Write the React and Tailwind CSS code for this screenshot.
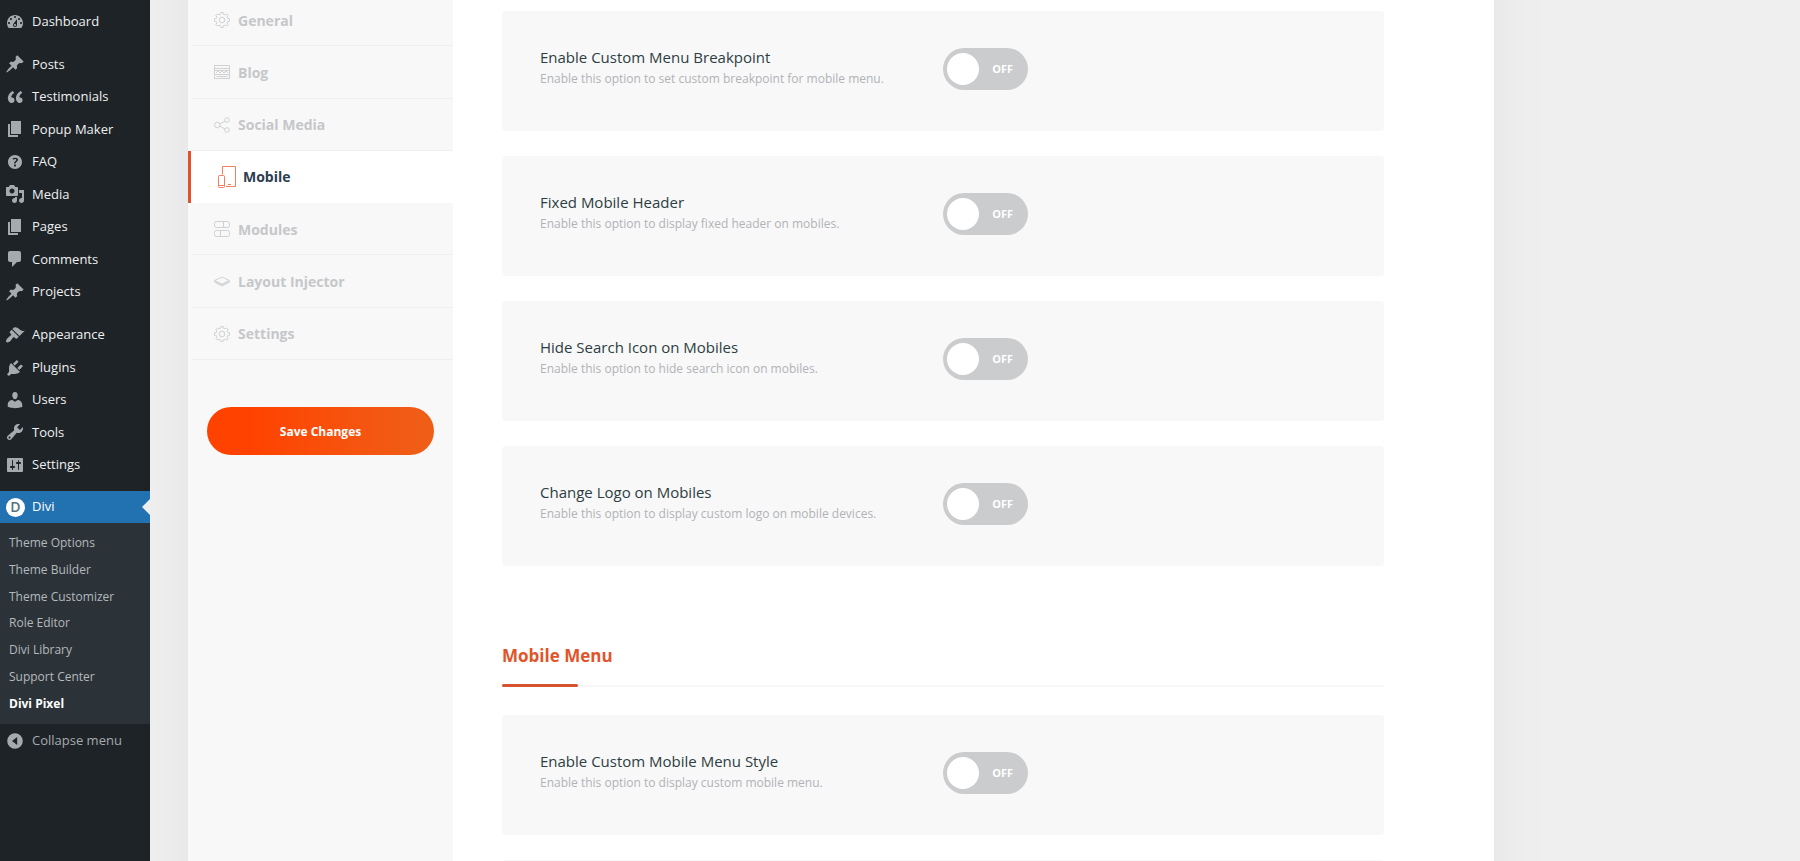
import { useState } from 'react';

const DASHICONS = {
    dashboard: 'M3.76 16h12.48c1.1-1.37 1.76-3.11 1.76-5 0-4.42-3.58-8-8-8s-8 3.58-8 8c0 1.89.66 3.63 1.76 5zM10 4c.55 0 1 .45 1 1s-.45 1-1 1-1-.45-1-1 .45-1 1-1zM6 6c.55 0 1 .45 1 1s-.45 1-1 1-1-.45-1-1 .45-1 1-1zm8 0c.55 0 1 .45 1 1s-.45 1-1 1-1-.45-1-1 .45-1 1-1zm-5.37 5.55L12 7v6c0 1.1-.9 2-2 2s-2-.9-2-2c0-.57.24-1.08.63-1.45zM4 10c.55 0 1 .45 1 1s-.45 1-1 1-1-.45-1-1 .45-1 1-1zm12 0c.55 0 1 .45 1 1s-.45 1-1 1-1-.45-1-1 .45-1 1-1zm-5 3c0-.55-.45-1-1-1s-1 .45-1 1 .45 1 1 1 1-.45 1-1z',
    pin: 'M10.44 3.02l1.82-1.82 6.36 6.35-1.83 1.82c-1.05-.68-2.48-.57-3.41.36l-.75.75c-.92.93-1.04 2.35-.35 3.41l-1.83 1.82-2.41-2.41-2.8 2.79c-.42.42-3.38 2.71-3.8 2.29s1.86-3.39 2.28-3.81l2.79-2.79L4.1 9.36l1.83-1.82c1.05.69 2.48.57 3.4-.36l.75-.75c.93-.92 1.05-2.35.36-3.41z',
    quote: 'M9.49 13.22c0-.74-.2-1.38-.61-1.9-.62-.78-1.83-.88-2.53-.72-.29-1.65 1.11-3.75 2.92-4.65L7.88 4c-2.73 1.3-5.42 4.28-4.96 8.05C3.21 14.43 4.59 16 6.54 16c.85 0 1.56-.25 2.12-.75s.83-1.18.83-2.03zm8.05 0c0-.74-.2-1.38-.61-1.9-.63-.78-1.83-.88-2.53-.72-.29-1.65 1.11-3.75 2.92-4.65L15.93 4c-2.73 1.3-5.41 4.28-4.95 8.05.29 2.38 1.66 3.95 3.61 3.95.85 0 1.56-.25 2.12-.75s.83-1.18.83-2.03z',
    page: 'M6 15V2h10v13H6zm-1 1h8v2H3V5h2v11z',
    help: 'M17 10c0-3.87-3.14-7-7-7-3.87 0-7 3.13-7 7s3.13 7 7 7c3.86 0 7-3.13 7-7zm-6.3 1.48H9.14v-.43c0-.38.08-.7.24-.98s.46-.57.88-.89c.41-.29.68-.53.81-.71.14-.18.2-.39.2-.62 0-.25-.09-.44-.28-.58-.19-.13-.45-.19-.79-.19-.58 0-1.25.19-2 .57l-.64-1.28c.87-.49 1.8-.74 2.77-.74.81 0 1.45.2 1.92.58.48.39.71.91.71 1.55 0 .43-.09.8-.29 1.11-.19.32-.57.67-1.11 1.06-.38.28-.61.49-.71.63-.1.15-.15.34-.15.57v.35zm-1.47 2.74c-.18-.17-.27-.42-.27-.73 0-.33.08-.58.26-.75s.43-.25.77-.25c.32 0 .57.09.75.26s.27.42.27.74c0 .3-.09.55-.27.72-.18.18-.43.27-.75.27-.33 0-.58-.09-.76-.26z',
    media: 'M13 11V4c0-.55-.45-1-1-1h-1.67L9 1H5L3.67 3H2c-.55 0-1 .45-1 1v7c0 .55.45 1 1 1h10c.55 0 1-.45 1-1zM7 4.5c1.38 0 2.5 1.12 2.5 2.5S8.38 9.5 7 9.5 4.5 8.38 4.5 7 5.62 4.5 7 4.5zM14 6h5v10.5c0 1.38-1.12 2.5-2.5 2.5S14 17.88 14 16.5s1.12-2.5 2.5-2.5c.17 0 .34.02.5.05V9h-3V6zm-4 8.05V13h2v3.5c0 1.38-1.12 2.5-2.5 2.5S7 17.88 7 16.5 8.12 14 9.5 14c.17 0 .34.02.5.05z',
    comment: 'M5 2h9c1.1 0 2 .9 2 2v7c0 1.1-.9 2-2 2h-2l-5 5v-5H5c-1.1 0-2-.9-2-2V4c0-1.1.9-2 2-2z',
    brush: 'M14.48 11.06L7.41 3.99l1.5-1.5c.5-.56 2.3-.47 3.51.32 1.21.8 1.43 1.28 2.91 2.1 1.18.64 2.45 1.26 4.45.85zm-.71.71L6.7 4.7 4.93 6.47c-.39.39-.39 1.02 0 1.41l1.06 1.06c.39.39.39 1.03 0 1.42-.6.6-1.43 1.11-2.21 1.69-.35.26-.7.53-1.01.84C1.43 14.23.4 16.08 1.4 17.07c.99 1 2.84-.03 4.18-1.36.31-.31.58-.66.85-1.02.57-.78 1.08-1.61 1.69-2.21.39-.39 1.02-.39 1.41 0l1.06 1.06c.39.39 1.02.39 1.41 0z',
    plug: 'M13.11 4.36L9.87 7.6 8 5.73l3.24-3.24c.35-.34 1.05-.2 1.56.32.52.51.66 1.21.31 1.55zm-8 1.77l.91-1.12 9.01 9.01-1.19.84c-.71.71-2.63 1.16-3.82 1.16H6.14L4.9 17.26c-.59.59-1.54.59-2.12 0-.59-.58-.59-1.53 0-2.12l1.24-1.24v-3.88c0-1.13.4-3.19 1.09-3.89zm7.26 3.97l3.24-3.24c.34-.35 1.04-.21 1.55.31.52.51.66 1.21.31 1.55l-3.24 3.25z',
    user: 'M10 9.25c-2.27 0-2.73-3.44-2.73-3.44C7 4.02 7.82 2 9.97 2c2.16 0 2.98 2.02 2.71 3.81 0 0-.41 3.44-2.68 3.44zm0 2.57L12.72 10c2.39 0 4.52 2.33 4.52 4.53v2.49s-3.65 1.13-7.24 1.13c-3.65 0-7.24-1.13-7.24-1.13v-2.49c0-2.25 1.94-4.48 4.47-4.48z',
    wrench: 'M16.68 9.77c-1.34 1.34-3.3 1.67-4.95.99l-5.41 6.52c-.99.99-2.59.99-3.58 0s-.99-2.59 0-3.57l6.52-5.42c-.68-1.65-.35-3.61.99-4.95 1.28-1.28 3.12-1.62 4.72-1.06l-2.89 2.89 2.82 2.82 2.86-2.87c.53 1.58.18 3.39-1.08 4.65zM3.81 16.21c.4.39 1.04.39 1.43 0 .4-.4.4-1.04 0-1.43-.39-.4-1.03-.4-1.43 0-.39.39-.39 1.03 0 1.43z',
    sliders: 'M18 16V4c0-.55-.45-1-1-1H3c-.55 0-1 .45-1 1v12c0 .55.45 1 1 1h14c.55 0 1-.45 1-1zM8 11h1c.55 0 1 .45 1 1s-.45 1-1 1H8v1.5c0 .28-.22.5-.5.5s-.5-.22-.5-.5V13H6c-.55 0-1-.45-1-1s.45-1 1-1h1V5.5c0-.28.22-.5.5-.5s.5.22.5.5V11zm5-2h-1c-.55 0-1-.45-1-1s.45-1 1-1h1V5.5c0-.28.22-.5.5-.5s.5.22.5.5V7h1c.55 0 1 .45 1 1s-.45 1-1 1h-1v5.5c0 .28-.22.5-.5.5s-.5-.22-.5-.5V9z',
    collapse: 'M10 2.2a7.8 7.8 0 1 0 0 15.6 7.8 7.8 0 0 0 0-15.6zM12.2 6v8L7 10z',
};

const CONTENT_ITEMS = [
    ['Posts', 'pin'],
    ['Testimonials', 'quote'],
    ['Popup Maker', 'page'],
    ['FAQ', 'help'],
    ['Media', 'media'],
    ['Pages', 'page'],
    ['Comments', 'comment'],
    ['Projects', 'pin'],
];

const ADMIN_ITEMS = [
    ['Appearance', 'brush'],
    ['Plugins', 'plug'],
    ['Users', 'user'],
    ['Tools', 'wrench'],
    ['Settings', 'sliders'],
];

const DIVI_ITEMS = ['Theme Options', 'Theme Builder', 'Theme Customizer', 'Role Editor', 'Divi Library', 'Support Center', 'Divi Pixel'];

const TABS = ['General', 'Blog', 'Social Media', 'Mobile', 'Modules', 'Layout Injector', 'Settings'];

const HEADER_OPTIONS = [
    ['Enable Custom Menu Breakpoint', 'Enable this option to set custom breakpoint for mobile menu.'],
    ['Fixed Mobile Header', 'Enable this option to display fixed header on mobiles.'],
    ['Hide Search Icon on Mobiles', 'Enable this option to hide search icon on mobiles.'],
    ['Change Logo on Mobiles', 'Enable this option to display custom logo on mobile devices.'],
];

function Dashicon({ name }) {
    return (
        <svg viewBox="0 0 20 20" className="w-5 h-5 shrink-0 fill-[#a7aaad]" fillRule="evenodd" aria-hidden="true">
            <path d={DASHICONS[name]} />
        </svg>
    );
}

function MenuLink({ label, icon }) {
    return (
        <a href="#" className="flex items-center gap-[7px] pl-[5px] text-[13px] text-[#f0f0f1]">
            <Dashicon name={icon} />
            {label}
        </a>
    );
}

function AdminMenu() {
    return (
        <nav className="w-[150px] shrink-0 bg-[#1d2327] pt-[6px]">
            <div className="grid h-8">
                <MenuLink label="Dashboard" icon="dashboard" />
            </div>
            <div className="mt-[10px] grid auto-rows-fr h-[260px]">
                {CONTENT_ITEMS.map(([label, icon]) => <MenuLink key={label} label={label} icon={icon} />)}
            </div>
            <div className="mt-[11px] grid auto-rows-fr h-[162px]">
                {ADMIN_ITEMS.map(([label, icon]) => <MenuLink key={label} label={label} icon={icon} />)}
            </div>
            <a href="#" className="relative mt-[10px] flex h-8 items-center gap-[7px] bg-[#2271b1] pl-[6px] text-[13px] text-white">
                <span className="flex h-[19px] w-[19px] items-center justify-center rounded-full bg-white text-[14px] font-semibold leading-none text-[#56707f]">D</span>
                Divi
                <span className="absolute right-0 top-1/2 -translate-y-1/2 border-y-8 border-r-8 border-y-transparent border-r-[#eeeeee]" />
            </a>
            <div className="grid auto-rows-fr h-[201px] bg-[#2c3338] py-[7px]">
                {DIVI_ITEMS.map((label) => (
                    <a
                        key={label}
                        href="#"
                        className={`flex items-center pl-[9px] text-[12px] ${label === 'Divi Pixel' ? 'font-bold text-white' : 'text-[#b4b9be]'}`}
                    >
                        {label}
                    </a>
                ))}
            </div>
            <button type="button" className="flex h-[34px] w-full items-center gap-[7px] pl-[5px] text-[13px] text-[#a7aaad]">
                <Dashicon name="collapse" />
                Collapse menu
            </button>
        </nav>
    );
}

function Gear() {
    return (
        <>
            <path d="M6.8.6h2.4l.4 1.8 1.3.5 1.6-1 1.6 1.7-1 1.6.5 1.2 1.9.4v2.4l-1.9.4-.5 1.2 1 1.6-1.6 1.7-1.6-1-1.3.5-.4 1.8H6.8l-.4-1.8-1.3-.5-1.6 1-1.6-1.7 1-1.6-.5-1.2L.5 9.2V6.8l1.9-.4.5-1.2-1-1.6 1.6-1.7 1.6 1 1.3-.5z" />
            <circle cx="8" cy="8" r="2.8" />
        </>
    );
}

const TAB_ICONS = {
    General: <Gear />,
    Settings: <Gear />,
    Blog: (
        <>
            <path d="M.5 1.5h15v13H.5zM.5 4.500h15M.5 10.500h15M2.500 12.500h11" />
            <path d="M2 9l2-2 2 2 2-2 2 2 2-2 2 2" />
            <path d="M.5 6.500h15" />
        </>
    ),
    'Social Media': (
        <>
            <circle cx="3.3" cy="8" r="2.8" />
            <circle cx="13" cy="3" r="2.3" />
            <circle cx="13" cy="13" r="2.3" />
            <path d="M6 7l5-3M6 9.2l5 2.8" />
        </>
    ),
    Modules: (
        <>
            <rect x=".5" y=".5" width="15" height="6" rx="2" />
            <rect x=".5" y="9.5" width="15" height="6" rx="2" />
            <path d="M9.5.5v6M6.5 9.5v6" />
        </>
    ),
    'Layout Injector': (
        <>
            <path d="M8 3l7.500 3.500L8 10 .5 6.500z" />
            <path d="M.5 6.500v1.500L8 12l7.500-4v-1.500" />
            <path d="M1 8l7 3 7-3" />
        </>
    ),
};

function TabLink({ label }) {
    if (label === 'Mobile') {
        return (
            <a href="#" aria-current="page" className="flex items-center gap-[7px] border-l-[3px] border-[#e2512a] bg-white pl-[27px] text-[14px] font-bold text-[#2c3e50]">
                <svg viewBox="0 0 18 22" className="h-[22px] w-[18px] fill-none stroke-[#f0805f]" aria-hidden="true">
                    <path d="M4.5 8.5V.5h13v20H8" />
                    <rect x=".5" y="9.500" width="6" height="12" rx="1" />
                    <path d="M.5 19.5h6M10 18.500h3" />
                </svg>
                {label}
            </a>
        );
    }
    return (
        <a href="#" className="ml-1 flex items-center gap-2 border-b border-[#efefef] pl-[22px] pt-px text-[14px] font-bold text-[#c5c7c9]">
            <svg viewBox="0 0 16 16" className="h-4 w-4 fill-none stroke-[#cfd1d3]" aria-hidden="true">
                {TAB_ICONS[label]}
            </svg>
            {label}
        </a>
    );
}

function OptionCard({ title, description }) {
    const [on, setOn] = useState(false);
    return (
        <label className="flex h-[120px] items-start rounded bg-[#f8f8f8] pl-[38px] pt-[34px]">
            <span className="w-[403px] shrink-0">
                <span className="block text-[15px] leading-6 text-[#2c3e42]">{title}</span>
                <span className="block text-[12px] leading-5 text-[#b0b3b7]">{description}</span>
            </span>
            <input type="checkbox" role="switch" className="peer sr-only" checked={on} onChange={() => setOn(!on)} />
            <span className="mt-[3px] flex h-[42px] w-[85px] items-center justify-between rounded-full bg-[#cbccce] pl-1 pr-[15px] peer-focus-visible:outline-2 peer-checked:bg-[#ff4200]">
                <span className="h-8 w-8 rounded-full bg-white" />
                <span className="text-[11px] font-bold text-white">{on ? 'ON' : 'OFF'}</span>
            </span>
        </label>
    );
}

export default function App() {
    return (
        <div className="flex h-screen overflow-hidden bg-[#efefef] font-['Open_Sans','Noto_Sans',sans-serif]">
            <AdminMenu />
            {/* the panel runs past both window edges so its shadow stays even */}
            <main className="-my-20 ml-[38px] mr-[306px] flex flex-1 bg-white shadow-[0_0_60px_rgba(0,0,0,0.05)]">
                <aside className="w-[265px] shrink-0 bg-[#f8f8f8] pt-20">
                    <nav className="-mt-[6px] grid auto-rows-fr h-[366px]">
                        {TABS.map((label) => <TabLink key={label} label={label} />)}
                    </nav>
                    <div className="px-[19px] pt-[47px]">
                        <button type="button" className="h-12 w-full rounded-full bg-linear-to-r from-[#ff4200] from-20% to-[#ee5f17] pt-[2px] text-[12px] font-bold text-white">
                            Save Changes
                        </button>
                    </div>
                </aside>
                <section className="flex-1 pl-[49px] pr-[110px] pt-[91px]">
                    <div className="grid gap-[25px]">
                        {HEADER_OPTIONS.map(([title, description]) => <OptionCard key={title} title={title} description={description} />)}
                    </div>
                    <h2 className="mt-[76px] border-b-2 border-[#f7f7f7] text-[17px] font-bold leading-7 text-[#e2542a]">
                        Mobile Menu
                        <span className="mt-[14px] -mb-[2px] block h-[3px] w-[76px] rounded-full bg-[#d5532e]" />
                    </h2>
                    <div className="mt-7 grid gap-[25px]">
                        <OptionCard title="Enable Custom Mobile Menu Style" description="Enable this option to display custom mobile menu." />
                        <div className="h-[120px] rounded bg-[#f8f8f8]" />
                    </div>
                </section>
            </main>
        </div>
    );
}
